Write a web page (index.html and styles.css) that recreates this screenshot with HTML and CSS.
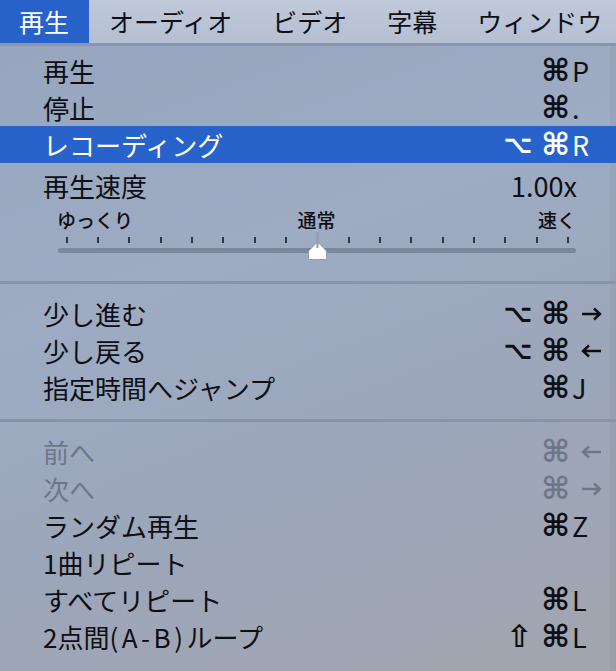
FILE: index.html
```html
<!DOCTYPE html>
<html lang="ja">
<head>
<meta charset="utf-8">
<title>再生メニュー</title>
<link rel="stylesheet" href="styles.css">
</head>
<body>
<div class="screen">
  <div class="menubar">
    <span class="title active">再生</span>
    <span class="title">オーディオ</span>
    <span class="title">ビデオ</span>
    <span class="title">字幕</span>
    <span class="title">ウィンドウ</span>
  </div>
  <div class="menu">
    <div class="item"><span class="label">再生</span><span class="sc"><span class="mods"><span class="cmd">⌘</span></span><span class="key">P</span></span></div>
    <div class="item"><span class="label">停止</span><span class="sc"><span class="mods"><span class="cmd">⌘</span></span><span class="key">.</span></span></div>
    <div class="item selected"><span class="label">レコーディング</span><span class="sc"><span class="mods"><span class="opt">⌥</span><span class="cmd">⌘</span></span><span class="key">R</span></span></div>
    <div class="speed">
      <div class="speed-head"><span class="label">再生速度</span><span class="speed-val">1.00x</span></div>
      <div class="speed-labels"><span class="l-left">ゆっくり</span><span class="l-mid">通常</span><span class="l-right">速く</span></div>
      <svg class="slider" width="616" height="30" viewBox="0 0 616 30">
        <rect x="58" y="16" width="518" height="5" rx="2.5" fill="#7b879d"/>
        <g fill="#2f3746">
          <rect x="66" y="5" width="2" height="6"/>
          <rect x="97" y="5" width="2" height="6"/>
          <rect x="128" y="5" width="2" height="6"/>
          <rect x="160" y="5" width="2" height="6"/>
          <rect x="191" y="5" width="2" height="6"/>
          <rect x="222" y="5" width="2" height="6"/>
          <rect x="254" y="5" width="2" height="6"/>
          <rect x="285" y="5" width="2" height="6"/>
          <rect x="348" y="5" width="2" height="6"/>
          <rect x="379" y="5" width="2" height="6"/>
          <rect x="410" y="5" width="2" height="6"/>
          <rect x="442" y="5" width="2" height="6"/>
          <rect x="473" y="5" width="2" height="6"/>
          <rect x="504" y="5" width="2" height="6"/>
          <rect x="536" y="5" width="2" height="6"/>
          <rect x="567" y="5" width="2" height="6"/>
        </g>
        <path d="M308.5 26.5 V19 L317.5 10 L326.5 19 V26.5 Q326.5 27.5 325.5 27.5 H309.5 Q308.5 27.5 308.5 26.5 Z" fill="#ffffff" stroke="#6d7789" stroke-width="0.6"/>
        <rect x="316.5" y="0" width="2" height="16" fill="#8f99ab"/>
      </svg>
    </div>
    <div class="sep"></div>
    <div class="item"><span class="label">少し進む</span><span class="sc"><span class="mods"><span class="opt">⌥</span><span class="cmd">⌘</span></span><span class="key"><svg class="arrow" width="21" height="14" viewBox="0 0 21 14"><path d="M1 7 H19 M13 1.5 L19 7 L13 12.5" fill="none" stroke="currentColor" stroke-width="2.4"/></svg></span></span></div>
    <div class="item"><span class="label">少し戻る</span><span class="sc"><span class="mods"><span class="opt">⌥</span><span class="cmd">⌘</span></span><span class="key"><svg class="arrow" width="21" height="14" viewBox="0 0 21 14"><path d="M20 7 H2 M8 1.5 L2 7 L8 12.5" fill="none" stroke="currentColor" stroke-width="2.4"/></svg></span></span></div>
    <div class="item"><span class="label">指定時間へジャンプ</span><span class="sc"><span class="mods"><span class="cmd">⌘</span></span><span class="key">J</span></span></div>
    <div class="sep"></div>
    <div class="item disabled"><span class="label">前へ</span><span class="sc"><span class="mods"><span class="cmd">⌘</span></span><span class="key"><svg class="arrow" width="21" height="14" viewBox="0 0 21 14"><path d="M20 7 H2 M8 1.5 L2 7 L8 12.5" fill="none" stroke="currentColor" stroke-width="2.4"/></svg></span></span></div>
    <div class="item disabled"><span class="label">次へ</span><span class="sc"><span class="mods"><span class="cmd">⌘</span></span><span class="key"><svg class="arrow" width="21" height="14" viewBox="0 0 21 14"><path d="M1 7 H19 M13 1.5 L19 7 L13 12.5" fill="none" stroke="currentColor" stroke-width="2.4"/></svg></span></span></div>
    <div class="item"><span class="label">ランダム再生</span><span class="sc"><span class="mods"><span class="cmd">⌘</span></span><span class="key">Z</span></span></div>
    <div class="item"><span class="label">1曲リピート</span></div>
    <div class="item"><span class="label">すべてリピート</span><span class="sc"><span class="mods"><span class="cmd">⌘</span></span><span class="key">L</span></span></div>
    <div class="item"><span class="label">2点間<span class="lat">(A-B)</span>ループ</span><span class="sc"><span class="mods"><span class="shift">⇧</span><span class="cmd">⌘</span></span><span class="key">L</span></span></div>
  </div>
</div>
</body>
</html>
```
FILE: styles.css
```css
html, body {
  margin: 0;
  padding: 0;
}
body {
  width: 616px;
  height: 671px;
  overflow: hidden;
  font-family: "Noto Sans CJK JP", "Noto Sans", sans-serif;
  color: #0d0f14;
}
.screen {
  width: 616px;
  height: 671px;
  display: flex;
  flex-direction: column;
  overflow: hidden;
}
.menubar {
  height: 43px;
  flex: none;
  display: flex;
  align-items: stretch;
  background: linear-gradient(180deg, #bfc9da 0%, #b5bfd1 100%);
  font-size: 25px;
  line-height: 43px;
}
.title {
  padding: 0 20px;
  white-space: nowrap;
}
.title:first-child {
  padding-left: 19px;
}
.title.active {
  background: #2762cb;
  color: #ffffff;
}
.menu {
  flex: 1;
  border-top: 3px solid #8896ad;
  padding-top: 6px;
  background: linear-gradient(160deg, #97a5be 0%, #9dabc3 35%, #9ca6ba 65%, #a2a5ae 100%);
  font-size: 26px;
  box-shadow: inset -6px 0 0 rgba(60, 64, 76, 0.06);
}
.item {
  height: 37px;
  display: flex;
  align-items: center;
  padding: 0 13px 0 43px;
  line-height: 37px;
  white-space: nowrap;
}
.item .label {
  flex: 1;
}
.lat {
  letter-spacing: 3.5px;
}
.item.selected {
  background: #2863cc;
  color: #ffffff;
}
.item.disabled {
  color: #6e7787;
}
.sc {
  display: flex;
  align-items: center;
  height: 37px;
}
.mods {
  display: flex;
  align-items: center;
  gap: 9px;
  height: 37px;
  font-family: "DejaVu Sans", sans-serif;
  font-weight: bold;
  line-height: 37px;
}
.cmd {
  font-size: 31px;
}
.opt {
  font-size: 25px;
}
.shift {
  font-size: 31px;
}
.key {
  width: 31px;
  padding-left: 2px;
  display: flex;
  align-items: center;
  font-size: 27px;
}
.arrow {
  display: block;
  margin-left: 9px;
}
.speed {
  height: 105px;
  display: flex;
  flex-direction: column;
}
.speed-head {
  height: 45px;
  line-height: 45px;
  display: flex;
  padding: 0 39px 0 43px;
}
.speed-head .label {
  flex: 1;
}
.speed-val {
  font-size: 27px;
}
.speed-labels {
  height: 24px;
  line-height: 24px;
  display: grid;
  grid-template-columns: 1fr auto 1fr;
  padding: 0 40px 0 57px;
  font-size: 19px;
  font-weight: 500;
}
.l-left {
  justify-self: start;
}
.l-mid {
  justify-self: center;
}
.l-right {
  justify-self: end;
}
.slider {
  display: block;
}
.sep {
  height: 27px;
  flex: none;
  display: flex;
  flex-direction: column;
  justify-content: center;
}
.sep::before {
  content: "";
  display: block;
  height: 3px;
  background: #8894aa;
  margin-top: 1px;
}
```
